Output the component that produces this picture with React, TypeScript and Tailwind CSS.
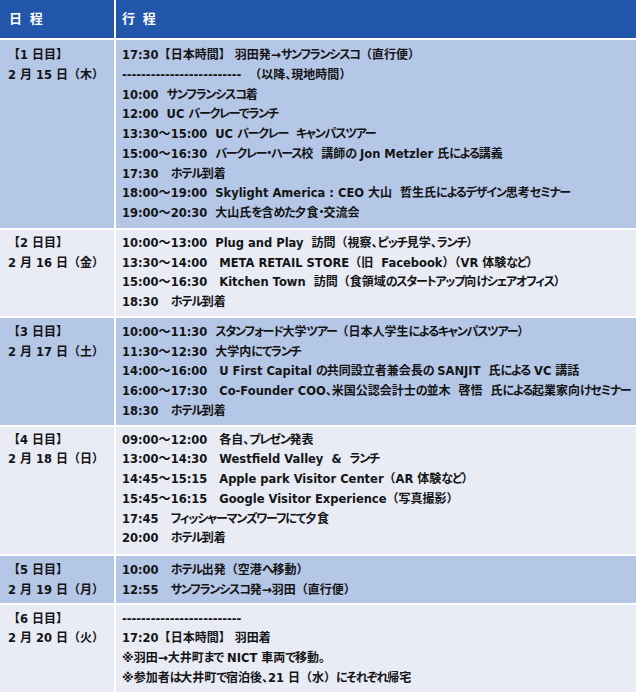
import type { ReactNode } from "react";

const font = "font-['DejaVu_Sans','Noto_Sans_CJK_JP',sans-serif]";

type Day = {
  label: string;
  date: string;
  tone: "blue" | "gray";
  pad: string;
  lines: string[];
};

const dashes = "-------------------------";

const days: Day[] = [
  {
    label: "【1 日目】",
    date: "2 月 15 日（木）",
    tone: "blue",
    pad: "pt-[6px] pb-[4px]",
    lines: [
      "17:30【日本時間】 羽田発→サンフランシスコ（直行便）",
      dashes + "  （以降、現地時間）",
      "10:00  サンフランシスコ着",
      "12:00  UC バークレーでランチ",
      "13:30〜15:00  UC バークレー  キャンパスツアー",
      "15:00〜16:30  バークレー・ハース校  講師の Jon Metzler 氏による講義",
      "17:30   ホテル到着",
      "18:00〜19:00  Skylight America : CEO 大山  哲生氏によるデザイン思考セミナー",
      "19:00〜20:30  大山氏を含めた夕食・交流会",
    ],
  },
  {
    label: "【2 日目】",
    date: "2 月 16 日（金）",
    tone: "gray",
    pad: "pt-[4px] pb-[3px]",
    lines: [
      "10:00〜13:00  Plug and Play  訪問（視察、ピッチ見学、ランチ）",
      "13:30〜14:00   META RETAIL STORE（旧  Facebook）（VR 体験など）",
      "15:00〜16:30   Kitchen Town  訪問（食領域のスタートアップ向けシェアオフィス）",
      "18:30   ホテル到着",
    ],
  },
  {
    label: "【3 日目】",
    date: "2 月 17 日（土）",
    tone: "blue",
    pad: "pt-[5px] pb-[3px]",
    lines: [
      "10:00〜11:30  スタンフォード大学ツアー（日本人学生によるキャンパスツアー）",
      "11:30〜12:30  大学内にてランチ",
      "14:00〜16:00   U First Capital の共同設立者兼会長の SANJIT  氏による VC 講話",
      "16:00〜17:30   Co-Founder COO、米国公認会計士の並木  啓悟  氏による起業家向けセミナー",
      "18:30   ホテル到着",
    ],
  },
  {
    label: "【4 日目】",
    date: "2 月 18 日（日）",
    tone: "gray",
    pad: "pt-[4px] pb-[5px]",
    lines: [
      "09:00〜12:00   各自、プレゼン発表",
      "13:00〜14:30   Westfield Valley  &  ランチ",
      "14:45〜15:15   Apple park Visitor Center（AR 体験など）",
      "15:45〜16:15   Google Visitor Experience（写真撮影）",
      "17:45   フィッシャーマンズワーフにて夕食",
      "20:00   ホテル到着",
    ],
  },
  {
    label: "【5 日目】",
    date: "2 月 19 日（月）",
    tone: "blue",
    pad: "pt-[5px] pb-[2px]",
    lines: ["10:00   ホテル出発（空港へ移動）", "12:55   サンフランシスコ発→羽田（直行便）"],
  },
  {
    label: "【6 日目】",
    date: "2 月 20 日（火）",
    tone: "gray",
    pad: "pt-[5px] pb-[3px]",
    lines: [
      dashes,
      "17:20【日本時間】 羽田着",
      "※羽田→大井町まで NICT 車両で移動。",
      "※参加者は大井町で宿泊後、21 日（水）にそれぞれ帰宅",
    ],
  },
];

const BRACKET = /^[（）【】]$/;
const KANA = /^[\u3040-\u30ff]+$/;
const CJK = /^[\u3000-\u300f\u3012-\u303f\u4e00-\u9fff\uff00-\uff07\uff0a-\uffef※→]+$/;

// brackets keep full width, kana are set tighter and latin a touch smaller (as in Meiryo UI)
function txt(s: string): ReactNode[] {
  return s
    .split(/([（）【】]|[\u3040-\u30ff]+|[\u3000-\u300f\u3012-\u303f\u4e00-\u9fff\uff00-\uff07\uff0a-\uffef※→]+)/)
    .filter((p) => p !== "")
    .map((part, i) => {
      if (BRACKET.test(part)) {
        return (
          <span key={i} className="[font-feature-settings:normal]">
            {part}
          </span>
        );
      }
      if (KANA.test(part)) {
        return (
          <span key={i} className="tracking-[-1.2px]">
            {part}
          </span>
        );
      }
      if (CJK.test(part)) return <span key={i}>{part}</span>;
      return (
        <span key={i} className="text-[11.5px]">
          {part}
        </span>
      );
    });
}

export default function App() {
  return (
    <div className={`w-[636px] h-[693px] overflow-hidden bg-white ${font} text-[12px] font-bold leading-[19.75px] text-[#141414] [font-feature-settings:'palt']`}>
      <div className="flex flex-col gap-[2px]">
        {/* header */}
        <div className="flex gap-[2px] h-[38px] text-white text-[13px]">
          <div className="w-[114px] shrink-0 bg-[#2156aa] flex items-center pl-[9px] tracking-[0.12em]">日 程</div>
          <div className="flex-1 bg-[#2156aa] flex items-center pl-[6px] tracking-[0.12em]">行 程</div>
        </div>

        {days.map((d, i) => {
          const bg = d.tone === "blue" ? "bg-[#b4c7e7]" : "bg-[#e9ebf5]";
          return (
            <div key={i} className="flex gap-[2px]">
              <div className={`w-[114px] shrink-0 ${bg} ${d.pad} pl-[8px] whitespace-pre`}>
                <div>{txt(d.label)}</div>
                <div>{txt(d.date)}</div>
              </div>
              <div className={`flex-1 ${bg} ${d.pad} pl-[6px] whitespace-pre`}>
                {d.lines.map((l, j) => (
                  <div key={j}>{txt(l)}</div>
                ))}
              </div>
            </div>
          );
        })}
      </div>
    </div>
  );
}
